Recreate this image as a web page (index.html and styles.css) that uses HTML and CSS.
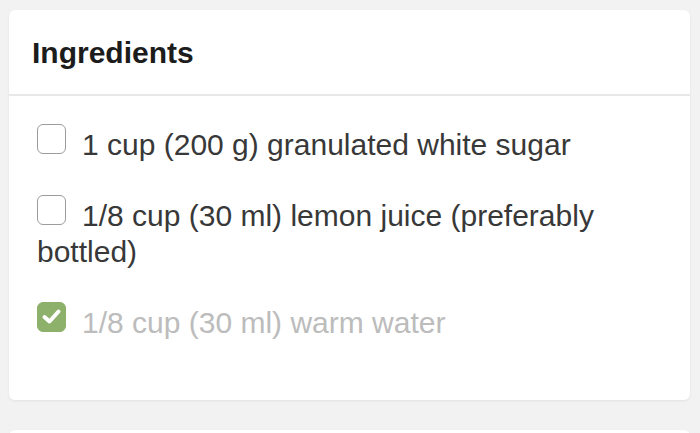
FILE: index.html
```html
<!DOCTYPE html>
<html lang="en">
<head>
<meta charset="utf-8">
<title>Ingredients</title>
<link rel="stylesheet" href="styles.css">
</head>
<body>
<section class="card">
  <header class="card-head">
    <h2 class="title">Ingredients</h2>
  </header>
  <ul class="list">
    <li class="item"><span class="box"></span>1 cup (200 g) granulated white sugar</li>
    <li class="item"><span class="box"></span>1/8 cup (30 ml) lemon juice (preferably bottled)</li>
    <li class="item done"><span class="box checked"><svg viewBox="0 0 29 29" width="29" height="29"><path d="M7.5 15 L12.5 19.5 L21.5 9.5" fill="none" stroke="#fff" stroke-width="4" stroke-linecap="round" stroke-linejoin="round"/></svg></span>1/8 cup (30 ml) warm water</li>
  </ul>
</section>
<section class="card next"></section>
</body>
</html>
```

FILE: styles.css
```css
html, body {
  margin: 0;
  background: #f2f2f2;
}
body {
  padding: 10px 10px 0 9px;
  font-family: "Liberation Sans", Arial, Helvetica, sans-serif;
  height: 433px;
  box-sizing: border-box;
  overflow: hidden;
}
.card {
  background: #fff;
  border-radius: 6px;
  box-shadow: 0 1px 3px rgba(0, 0, 0, 0.07);
}
.card-head {
  height: 86px;
  border-bottom: 2px solid #e8e8e8;
  padding: 0 23px;
  box-sizing: border-box;
  display: flex;
  align-items: flex-start;
}
.title {
  margin: 25px 0 0 0;
  font-size: 30px;
  line-height: 36px;
  font-weight: bold;
  color: #1c1c1c;
}
.list {
  list-style: none;
  margin: 0;
  padding: 30px 26px 59px 28px;
}
.item {
  font-size: 30px;
  line-height: 36px;
  color: #383838;
  margin-bottom: 34px;
}
.item:last-child {
  margin-bottom: 0;
}
.item.done {
  color: #bcbcbc;
}
.box {
  display: inline-block;
  width: 29px;
  height: 30px;
  box-sizing: border-box;
  border: 1.5px solid #9c9c9c;
  border-radius: 6px;
  vertical-align: -1px;
  transform: translateY(-2px);
  margin-right: 16px;
  position: relative;
}
.box.checked {
  background: #8db16b;
  border-color: #8db16b;
}
.box svg {
  position: absolute;
  left: -1.5px;
  top: -1px;
}
.next {
  margin-top: 30px;
  height: 20px;
  border-radius: 6px 6px 0 0;
}
```
